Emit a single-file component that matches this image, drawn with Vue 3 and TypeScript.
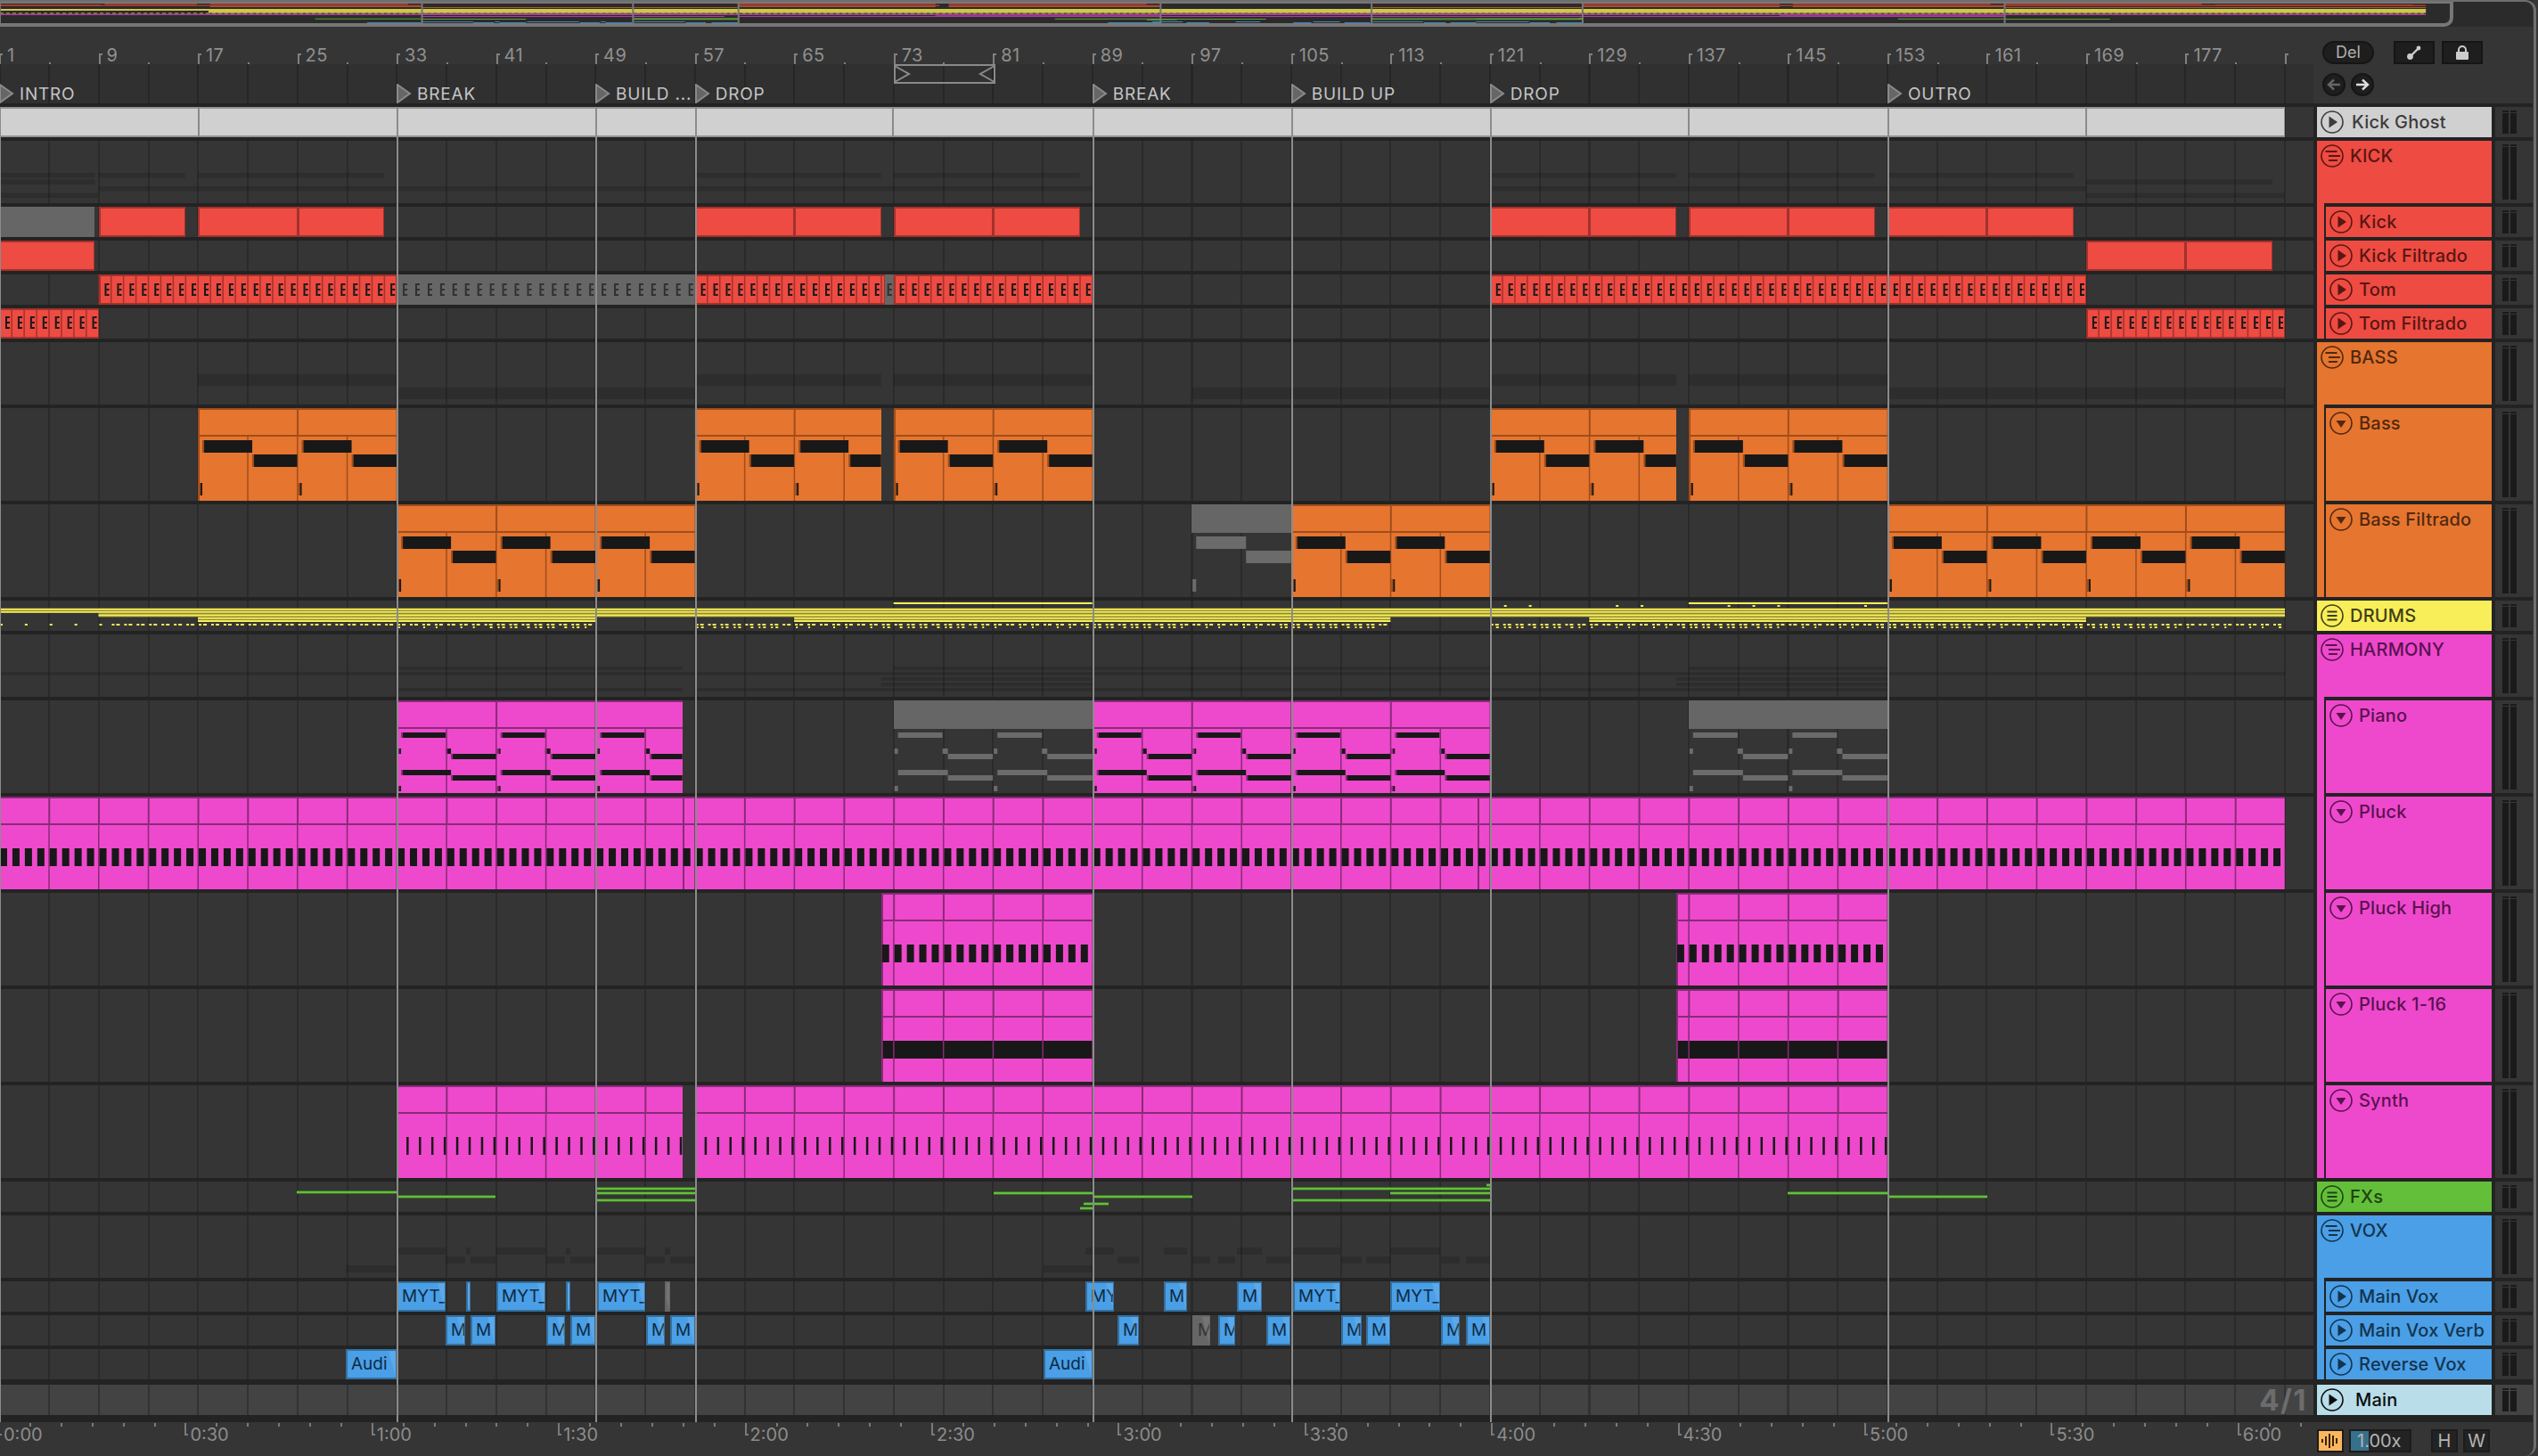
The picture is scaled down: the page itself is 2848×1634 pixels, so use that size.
<template>
  <div class="app">
    <!-- song overview strip -->
    <div class="overview">
      <svg class="overview-svg" width="2753" height="26">
        <rect v-for="(o, i) in overviewMarks" :key="i" :class="o.c" :x="o.x" :y="o.y" :width="o.w" :height="o.h" />
        <rect v-for="l in locators" :key="l.bar" class="ov-loc" :x="barX(l.bar) * OV" y="3" width="2" height="23" />
      </svg>
      <div class="overview-rim"></div>
    </div>

    <!-- bar ruler, locators, view buttons -->
    <div class="ruler">
      <div class="ruler-main">
        <div class="bar-scale">
          <template v-for="n in barTicks" :key="n">
            <i :class="(n - 1) % 8 === 0 ? 'bar-tick' : 'bar-tick-small'" :style="{ left: barX(n) + 'px' }"></i>
            <span v-if="(n - 1) % 8 === 0 && n < 185" class="bar-num" :style="{ left: barX(n) + 9 + 'px' }">{{ n }}</span>
          </template>
        </div>
        <div class="loc-lane">
          <svg class="loop" :style="{ left: barX(73) + 'px' }" width="116" height="22" viewBox="0 0 116 22">
            <path d="M1 1H113V21H1ZM1 2L17 11L1 20M113 2L97 11L113 20" fill="none" stroke="#8a8a8a" stroke-width="2" />
          </svg>
          <div v-for="l in locators" :key="l.bar" class="locator" :style="{ left: barX(l.bar) + 'px' }">
            <svg width="17" height="22" viewBox="0 0 17 22"><path d="M1 1L15 11L1 21Z" fill="#666" stroke="#8a8a8a" stroke-width="2" /></svg>
            <span>{{ l.name }}</span>
          </div>
        </div>
      </div>
      <div class="view-tools">
        <div class="tool-line">
          <span class="del">Del</span>
          <span class="square">
            <svg width="18" height="18" viewBox="0 0 18 18"><path d="M4 14L14 4" stroke="#ccc" stroke-width="2.4" /><circle cx="4.5" cy="13.5" r="3.4" fill="#ccc" /><circle cx="14" cy="4" r="2.4" fill="#ccc" /></svg>
          </span>
          <span class="square">
            <svg width="16" height="18" viewBox="0 0 16 18"><path d="M4 9V6a4 4 0 0 1 8 0v3" fill="none" stroke="#ccc" stroke-width="2" /><rect x="1" y="8" width="14" height="9" rx="1" fill="#ccc" /></svg>
          </span>
        </div>
        <div class="tool-line nav">
          <span class="round"><svg width="16" height="14" viewBox="0 0 16 14"><path d="M15 7H3M8 1.5L2 7L8 12.5" fill="none" stroke="#666" stroke-width="2.4" /></svg></span>
          <span class="round"><svg width="16" height="14" viewBox="0 0 16 14"><path d="M1 7H13M8 1.5L14 7L8 12.5" fill="none" stroke="#ddd" stroke-width="2.4" /></svg></span>
        </div>
      </div>
    </div>

    <!-- tracks -->
    <div class="tracks">
      <div
        v-for="t in tracks"
        :key="t.name"
        class="row"
        :class="[`tone-${t.tone}`, { 'row-main': t.tone === 'main' }]"
        :style="{ height: t.h + 'px' }"
      >
        <div class="lane">
          <div
            v-for="(c, i) in t.clips"
            :key="i"
            class="clip"
            :class="[t.tall ? 'clip-tall' : 'clip-short', { off: c.off, 'clip-vox': c.label !== undefined }]"
            :style="{ left: c.x + 'px', width: c.w + 'px' }"
          >
            <div v-if="t.tall" class="clip-title"></div>
            <span v-if="c.label" class="clip-label">{{ c.label }}</span>
          </div>
          <svg v-if="t.marks.length" class="marks" width="2596" :height="t.h">
            <rect v-for="(m, i) in t.marks" :key="i" :class="m.c" :x="m.x" :y="m.y" :width="m.w" :height="m.h" />
          </svg>
          <span v-if="t.tone === 'main'" class="grid-label">4/1</span>
        </div>
        <div class="head" :class="{ 'head-child': t.child }">
          <div class="head-line" :class="`icon-${t.icon}`">
            <svg class="icon" width="26" height="26" viewBox="0 0 26 26" fill="none" stroke="currentColor" stroke-width="1.6">
              <circle cx="13" cy="13" r="12" />
              <path v-if="t.icon === 'play'" d="M9.5 6.5L19 13L9.5 19.5Z" fill="currentColor" stroke="none" />
              <path v-else-if="t.icon === 'down'" d="M7.5 10H18.5L13 18Z" fill="currentColor" stroke="none" />
              <path v-else-if="t.icon === 'fold'" d="M5.5 8H18.5M9 13H22M9 18H19" stroke-width="2" />
              <path v-else d="M7.5 8.5H18.5M7.5 13H18.5M7.5 17.5H18.5" stroke-width="2" />
            </svg>
            <span class="head-name">{{ t.name }}</span>
          </div>
        </div>
        <div class="meter"><i></i><i></i></div>
      </div>
      <div class="loc-lines">
        <i v-for="l in locators" :key="l.bar" :style="{ left: barX(l.bar) + 'px' }"></i>
      </div>
    </div>

    <!-- time ruler -->
    <div class="timebar">
      <div class="time-scale">
        <i v-for="n in timeTicks" :key="n" :class="n % 6 === 0 ? 'time-major' : 'time-minor'" :style="{ left: -2 + n * (TIME30 / 6) + 'px' }"></i>
        <span v-for="n in 13" :key="n" class="time-label" :style="{ left: 4 + (n - 1) * TIME30 + 'px' }">{{ timeLabel(n - 1) }}</span>
      </div>
      <div class="time-tools">
        <span class="wave">
          <svg width="22" height="18" viewBox="0 0 22 18"><path d="M2 7V11M6 4V14M10 1V17M14 3V15M18 6V12" stroke="#3a2408" stroke-width="2" /></svg>
        </span>
        <span class="speed"><i></i><b>1.00x</b></span>
        <span class="key">H</span>
        <span class="key">W</span>
      </div>
    </div>

    <div class="frame"></div>
  </div>
</template>

<script setup lang="ts">
interface Clip {
  x: number
  w: number
  off?: boolean
  label?: string
}

interface Mark {
  x: number
  y: number
  w: number
  h: number
  c: string
}

type Tone = 'ghost' | 'red' | 'orange' | 'yellow' | 'magenta' | 'green' | 'blue' | 'main'

interface Track {
  name: string
  h: number
  tone: Tone
  icon: 'play' | 'down' | 'fold' | 'lines'
  child?: boolean
  tall?: boolean
  clips: Clip[]
  marks: Mark[]
}

const BAR = 13.94
const OV = 1.0617
const TIME30 = 209.4
const barX = (bar: number) => -1 + (bar - 1) * BAR

const b = (from: number, to: number, off = false): Clip => ({ x: barX(from), w: (to - from) * BAR, off })
const p = (l: number, r: number, label?: string, off = false): Clip => ({ x: l, w: r - l, label, off })

// vox clips only show as much of their name as fits
function vox(l: number, r: number, off = false) {
  const w = r - l
  const label = w < 14 ? '' : w < 30 ? 'M' : w < 45 ? 'MY' : 'MYT_'
  return p(l, r, label, off)
}

const locators = [
  { bar: 1, name: 'INTRO' },
  { bar: 33, name: 'BREAK' },
  { bar: 49, name: 'BUILD ...' },
  { bar: 57, name: 'DROP' },
  { bar: 89, name: 'BREAK' },
  { bar: 105, name: 'BUILD UP' },
  { bar: 121, name: 'DROP' },
  { bar: 153, name: 'OUTRO' },
]

const barTicks: number[] = []
for (let n = 1; n <= 185; n += 4) barTicks.push(n)
barTicks.push(189)

const timeTicks: number[] = []
for (let n = 0; n <= 76; n++) timeTicks.push(n)

function timeLabel(i: number) {
  return `${Math.floor(i / 2)}:${i % 2 ? '30' : '00'}`
}

// repeat a rectangle along the bar grid, cut to the clip
function tile(m: Mark[], clip: Clip, period: number, dx: number, w: number, y: number, h: number, c: string) {
  let k = Math.floor((clip.x + 1) / period) - 1
  for (; ; k++) {
    const x0 = -1 + k * period + dx
    if (x0 >= clip.x + clip.w) break
    const l = Math.max(x0, clip.x)
    const r = Math.min(x0 + w, clip.x + clip.w)
    if (r > l) m.push({ x: l, y, w: r - l, h, c })
  }
}

function dividers(m: Mark[], clips: Clip[], titleStep: number, h: number) {
  for (const c of clips) {
    if (c.off) continue
    tile(m, c, titleStep, -0.5, 2, 2, 28, 'm-edge')
    tile(m, c, BAR * 4, -0.5, 1.5, 32, h - 32, 'm-edge')
  }
}

function patternNotes(clips: Clip[], items: number[][]) {
  const m: Mark[] = []
  dividers(m, clips, BAR * 8, 104)
  for (const c of clips) {
    for (const [dx, w, y, h] of items) {
      if (!c.off) tile(m, c, BAR * 8, dx, 2, y, h, 'm-edge')
      tile(m, c, BAR * 8, c.off ? dx : dx + 2, c.off ? w : w - 2, y, h, c.off ? 'm-off' : 'm-note')
    }
  }
  return m
}

function barNotes(clips: Clip[], dx: number, w: number, c = 'm-note') {
  const m: Mark[] = []
  dividers(m, clips, BAR * 4, 104)
  for (const clip of clips) tile(m, clip, BAR, dx, w, 58, 20, c)
  return m
}

function tomNotes(clips: Clip[], top: number) {
  const m: Mark[] = []
  for (const c of clips) {
    const ink = c.off ? 'm-tom-off' : 'm-note'
    if (!c.off) tile(m, c, BAR, -0.5, 1.5, 0, 34, 'm-edge')
    tile(m, c, BAR, 7, 2, top, 14, ink)
    tile(m, c, BAR, 9, 3, top, 2, ink)
    tile(m, c, BAR, 9, 3, top + 6, 2, ink)
    tile(m, c, BAR, 9, 3, top + 12, 2, ink)
  }
  return m
}

function drumMarks() {
  const m: Mark[] = []
  const band = (from: number, to: number, y: number, h: number, c: string) =>
    m.push({ x: barX(from), y, w: (to - from) * BAR, h, c })
  band(1, 185, 8.5, 5, 'm-olive')
  band(9, 185, 13.5, 5, 'm-olive')
  band(1, 185, 9, 1.7, 'm-yellow')
  band(1, 185, 12, 1.7, 'm-yellow')
  band(9, 185, 15.5, 2, 'm-yellow')
  for (const [from, to] of [[17, 49], [65, 113], [129, 169]]) {
    band(from, to, 18, 6, 'm-olive')
    band(from, to, 19, 1.7, 'm-yellow')
    band(from, to, 22, 2, 'm-yellow')
  }
  band(73, 89, 2, 2, 'm-yellow')
  band(137, 153, 2, 2, 'm-yellow')
  for (let i = 121; i < 153; i += 1) {
    if ((i * 7 + (i % 5) * 3) % 4 === 0) m.push({ x: barX(i) + 2, y: 5, w: 3, h: 2, c: 'm-yellow' })
  }
  for (let i = 1; i < 185; i++) {
    if ((i >= 49 && i < 57) || (i >= 113 && i < 121)) continue
    const x = barX(i)
    if (i > 9 || i % 2) m.push({ x: x + 1, y: 26, w: 3, h: 2, c: 'm-yellow' })
    if (i > 9) m.push({ x: x + 6, y: 26, w: 4, h: 2, c: 'm-yellow' })
    if (i >= 33 && i % 3 !== 1) m.push({ x: x + 2, y: 29, w: 2, h: 2, c: 'm-yellow' })
    if (i >= 33 && (i % 16) > 7) m.push({ x: x + 7, y: 29, w: 3, h: 2, c: 'm-yellow' })
  }
  return m
}

function fxMarks() {
  const lines: number[][] = [
    [333, 445, 11],
    [445, 556, 16],
    [669, 781, 7],
    [669, 781, 12],
    [669, 781, 20],
    [1115, 1226, 12],
    [1226, 1338, 16],
    [1216, 1244, 24],
    [1212, 1226, 29],
    [1449, 1672, 7],
    [1560, 1672, 12],
    [1449, 1672, 20],
    [1668, 1672, 3],
    [2006, 2118, 12],
    [2118, 2230, 16],
  ]
  const m: Mark[] = []
  for (const [l, r, y] of lines) m.push({ x: l, y: y - 1, w: r - l, h: 4, c: 'm-fx-edge' })
  for (const [l, r, y] of lines) m.push({ x: l, y, w: r - l, h: 2, c: 'm-fx' })
  return m
}

const kickClips = [b(1, 8.7, true), b(9, 16), b(17, 25), b(25, 32), b(57, 65), b(65, 72), b(73, 81), b(81, 88), b(121, 129), b(129, 136), b(137, 145), b(145, 152), b(153, 161), b(161, 168)]
const filtClips = [b(1, 8.7), b(169, 177), b(177, 184)]
const tomClips = [b(9, 33), b(33, 57, true), b(57, 72.3), b(72.3, 73, true), b(73, 89), b(121, 137), b(137, 169)]
const tomFClips = [b(1, 9), b(169, 185)]
const bassClips = [b(17, 33), b(57, 72), b(73, 89), b(121, 136), b(137, 153)]
const bassFClips = [b(33, 57), b(97, 105, true), b(105, 121), b(153, 185)]
const pianoClips = [b(33, 56), b(73, 89, true), b(89, 121), b(137, 153, true)]
const pluckClips = [b(1, 56), b(56, 120), b(120, 185)]
const highClips = [b(72, 89), b(136, 153)]
const synthClips = [b(33, 56), b(57, 153)]
const mainVox = [vox(445, 500), vox(523, 528), vox(557, 612), vox(635, 640), vox(670, 724), vox(746, 752, true), vox(1218, 1250), vox(1306, 1332), vox(1388, 1416), vox(1451, 1504), vox(1560, 1616)]
const verbVox = [vox(500, 522), vox(528, 556), vox(613, 634), vox(640, 668), vox(725, 746), vox(752, 780), vox(1254, 1278), vox(1338, 1358, true), vox(1367, 1386), vox(1421, 1448), vox(1505, 1528), vox(1533, 1560), vox(1617, 1638), vox(1645, 1672)]
const revVox = [p(388, 445, 'Audi'), p(1171, 1226, 'Audi')]

const bassItems = [[5, 56, 36, 14], [61, 50.5, 52, 14], [1, 4, 84, 14]]
const pianoItems = [[5, 50, 36, 6], [61, 50.5, 60, 6], [5, 56, 78, 6], [61, 50.5, 84, 6], [1, 4, 54, 6], [55, 6, 54, 6], [1, 4, 96, 6]]

const solid: Mark[] = []
highClips.forEach((c) => solid.push({ x: c.x + 2, y: 58, w: c.w - 2, h: 20, c: 'm-note' }))
dividers(solid, highClips, BAR * 4, 104)

const ghostTicks: Mark[] = []
for (const x of [223, 1002, 1895, 2341]) ghostTicks.push({ x: x - 1, y: 0, w: 2, h: 34, c: 'm-grey' })

const tracks: Track[] = [
  { name: 'Kick Ghost', h: 34, tone: 'ghost', icon: 'play', clips: [p(-3, 2564)], marks: ghostTicks },
  { name: 'KICK', h: 70, tone: 'red', icon: 'fold', clips: [], marks: [] },
  { name: 'Kick', h: 34, tone: 'red', icon: 'play', child: true, clips: kickClips, marks: [] },
  { name: 'Kick Filtrado', h: 34, tone: 'red', icon: 'play', child: true, clips: filtClips, marks: [] },
  { name: 'Tom', h: 34, tone: 'red', icon: 'play', child: true, clips: tomClips, marks: tomNotes(tomClips, 10) },
  { name: 'Tom Filtrado', h: 34, tone: 'red', icon: 'play', child: true, clips: tomFClips, marks: tomNotes(tomFClips, 9) },
  { name: 'BASS', h: 70, tone: 'orange', icon: 'fold', clips: [], marks: [] },
  { name: 'Bass', h: 104, tone: 'orange', icon: 'down', child: true, tall: true, clips: bassClips, marks: patternNotes(bassClips, bassItems) },
  { name: 'Bass Filtrado', h: 104, tone: 'orange', icon: 'down', child: true, tall: true, clips: bassFClips, marks: patternNotes(bassFClips, bassItems) },
  { name: 'DRUMS', h: 34, tone: 'yellow', icon: 'lines', clips: [], marks: drumMarks() },
  { name: 'HARMONY', h: 70, tone: 'magenta', icon: 'fold', clips: [], marks: [] },
  { name: 'Piano', h: 104, tone: 'magenta', icon: 'down', child: true, tall: true, clips: pianoClips, marks: patternNotes(pianoClips, pianoItems) },
  { name: 'Pluck', h: 104, tone: 'magenta', icon: 'down', child: true, tall: true, clips: pluckClips, marks: barNotes(pluckClips, 1, 8) },
  { name: 'Pluck High', h: 104, tone: 'magenta', icon: 'down', child: true, tall: true, clips: highClips, marks: barNotes(highClips, 1, 8) },
  { name: 'Pluck 1-16', h: 104, tone: 'magenta', icon: 'down', child: true, tall: true, clips: highClips, marks: solid },
  { name: 'Synth', h: 104, tone: 'magenta', icon: 'down', child: true, tall: true, clips: synthClips, marks: barNotes(synthClips, 11, 2.5) },
  { name: 'FXs', h: 34, tone: 'green', icon: 'lines', clips: [], marks: fxMarks() },
  { name: 'VOX', h: 70, tone: 'blue', icon: 'fold', clips: [], marks: [] },
  { name: 'Main Vox', h: 34, tone: 'blue', icon: 'play', child: true, clips: mainVox, marks: [] },
  { name: 'Main Vox Verb', h: 34, tone: 'blue', icon: 'play', child: true, clips: verbVox, marks: [] },
  { name: 'Reverse Vox', h: 34, tone: 'blue', icon: 'play', child: true, clips: revVox, marks: [] },
  { name: 'Main', h: 34, tone: 'main', icon: 'play', clips: [], marks: [] },
]

// folded group lanes show a faint band for each child's clips
tracks.forEach((t, i) => {
  if (t.icon !== 'fold') return
  const kids: Track[] = []
  for (let j = i + 1; j < tracks.length && tracks[j].child; j++) kids.push(tracks[j])
  const step = 30 / kids.length
  kids.forEach((k, n) => {
    for (const c of k.clips) t.marks.push({ x: c.x, y: 36 + n * step, w: c.w, h: step - 2, c: 'm-ghost' })
  })
})

const overviewRows: Record<string, [number, number, string]> = {
  Kick: [4, 1.5, 'ov-red'],
  'Kick Filtrado': [5, 1, 'ov-red'],
  Tom: [5.5, 1.5, 'ov-red'],
  'Tom Filtrado': [5.5, 1.5, 'ov-red'],
  Bass: [7, 1, 'ov-orange'],
  'Bass Filtrado': [8, 1, 'ov-orange'],
  Piano: [15, 1, 'ov-magenta'],
  Pluck: [15.5, 1.5, 'ov-magenta'],
  'Pluck High': [16.5, 1, 'ov-magenta'],
  'Pluck 1-16': [17.5, 1, 'ov-magenta'],
  Synth: [18, 1, 'ov-magenta'],
  'Main Vox': [24, 1, 'ov-blue'],
  'Main Vox Verb': [25, 1, 'ov-blue'],
  'Reverse Vox': [25, 1, 'ov-blue'],
}

const overviewMarks: Mark[] = []
const end = barX(185) * OV
overviewMarks.push({ x: 0, y: 10, w: end, h: 2, c: 'ov-yellow' })
overviewMarks.push({ x: 234, y: 12, w: end - 234, h: 2.5, c: 'ov-yellow' })
for (let x = 0; x < end; x += 7) overviewMarks.push({ x, y: 14.5, w: 4, h: 1, c: 'ov-yellow' })
for (const t of tracks) {
  const row = overviewRows[t.name]
  if (row) {
    for (const c of t.clips) {
      if (!c.off) overviewMarks.push({ x: c.x * OV, y: row[0], w: c.w * OV, h: row[1], c: row[2] })
    }
  }
  if (t.tone === 'green') {
    for (const m of t.marks) {
      if (m.c === 'm-fx') overviewMarks.push({ x: m.x * OV, y: 20 + m.y / 16, w: m.w * OV, h: 1, c: 'ov-green' })
    }
  }
}
</script>

<style>
html,
body {
  margin: 0;
  background: #111;
}
</style>

<style scoped>
.app {
  position: relative;
  width: 2848px;
  height: 1634px;
  overflow: hidden;
  display: flex;
  flex-direction: column;
  background: #353535;
  font-family: Inter, "Noto Sans", sans-serif;
}

.frame {
  position: absolute;
  inset: 0 2px 0 0;
  border-top: 2px solid #6e6e6e;
  border-right: 3px solid #6e6e6e;
  border-radius: 0 12px 12px 0;
  pointer-events: none;
}

/* overview */
.overview {
  position: relative;
  height: 30px;
  flex: none;
  width: 2842px;
  background: #2b2b2b;
}

.overview-svg {
  position: absolute;
  left: 0;
  top: 0;
}

.overview-rim {
  position: absolute;
  left: -6px;
  top: 2px;
  width: 2759px;
  height: 28px;
  box-sizing: border-box;
  border: 2px solid #777;
  border-bottom-width: 4px;
  border-right-width: 4px;
  border-radius: 0 0 10px 0;
}

.ov-red {
  fill: #a83a32;
}

.ov-orange {
  fill: #a35a2a;
}

.ov-yellow {
  fill: #cfc64a;
}

.ov-magenta {
  fill: #a8409a;
}

.ov-green {
  fill: #5aa236;
}

.ov-blue {
  fill: #3e84bd;
}

.ov-loc {
  fill: #777;
}

/* bar ruler */
.ruler {
  flex: none;
  display: grid;
  grid-template-columns: 2596px 246px;
  column-gap: 4px;
  width: 2842px;
  height: 86px;
}

.ruler-main {
  position: relative;
  overflow: hidden;
  display: flex;
  flex-direction: column;
}

.bar-scale {
  position: relative;
  height: 42px;
  flex: none;
}

.bar-tick {
  position: absolute;
  top: 30px;
  width: 2px;
  height: 12px;
  background: #808080;
}

.bar-tick::after {
  content: "";
  position: absolute;
  left: 2px;
  top: 0;
  width: 2px;
  height: 2px;
  background: #808080;
}

.bar-tick-small {
  position: absolute;
  top: 40px;
  width: 2px;
  height: 2px;
  background: #808080;
}

.bar-num {
  position: absolute;
  top: 20px;
  font-size: 20px;
  line-height: 24px;
  letter-spacing: 0.4px;
  color: #909090;
}

.loc-lane {
  position: relative;
  flex: 1;
  background-color: #303030;
  background-image: repeating-linear-gradient(90deg, #262626 -1.5px 0.5px, transparent 0.5px 54.25px);
}

.loop {
  position: absolute;
  top: 0;
}

.locator {
  position: absolute;
  top: 22px;
  display: flex;
  align-items: center;
  gap: 6px;
  height: 22px;
  font-size: 19px;
  letter-spacing: 0.8px;
  color: #c4c4c4;
}

.view-tools {
  padding: 16px 0 0 6px;
  display: flex;
  flex-direction: column;
  gap: 10px;
}

.tool-line {
  display: flex;
  align-items: center;
  height: 26px;
}

.del {
  box-sizing: border-box;
  width: 58px;
  height: 26px;
  border-radius: 13px;
  margin-right: 22px;
  background: #1e1e1e;
  border: 2px solid #151515;
  color: #b0b0b0;
  font-size: 18px;
  line-height: 22px;
  text-align: center;
}

.square {
  box-sizing: border-box;
  width: 46px;
  height: 26px;
  margin-right: 8px;
  background: #1e1e1e;
  border: 2px solid #151515;
  display: flex;
  align-items: center;
  justify-content: center;
}

.nav {
  gap: 6px;
}

.round {
  box-sizing: border-box;
  width: 26px;
  height: 26px;
  border-radius: 50%;
  background: #1e1e1e;
  border: 2px solid #151515;
  display: flex;
  align-items: center;
  justify-content: center;
}

/* tracks */
.tracks {
  position: relative;
  flex: none;
  box-sizing: border-box;
  width: 2842px;
  padding: 4px 0;
  display: flex;
  flex-direction: column;
  gap: 4px;
  background: #232323;
}

.row {
  display: grid;
  grid-template-columns: 2596px 196px 42px;
  column-gap: 4px;
}

.row-main {
  margin-top: 2px;
}

.tone-ghost {
  --c: #d0d0d0;
  --e: #929292;
  --ink: #3c3c3c;
}

.tone-red {
  --c: #ee4b42;
  --e: #a2322c;
  --ink: #5a1613;
}

.tone-orange {
  --c: #e6752f;
  --e: #a04e1c;
  --ink: #52290f;
}

.tone-yellow {
  --c: #f8ee5a;
  --e: #a09a3a;
  --ink: #413e14;
}

.tone-magenta {
  --c: #ee49cc;
  --e: #8a2a78;
  --ink: #5a1250;
}

.tone-green {
  --c: #63bf3a;
  --e: #3f7a28;
  --ink: #1f4310;
}

.tone-blue {
  --c: #4a9fe6;
  --e: #34709f;
  --ink: #13344f;
}

.tone-main {
  --c: #b9dde9;
  --e: #7c9ba5;
  --ink: #0c0c0c;
}

.lane {
  position: relative;
  overflow: hidden;
  background-color: #353535;
  background-image: repeating-linear-gradient(90deg, #2a2a2a -1.5px 0.5px, transparent 0.5px 54.25px);
}

.row-main .lane {
  background-color: #434343;
  background-image: repeating-linear-gradient(90deg, #323232 -1.5px 0.5px, transparent 0.5px 54.25px);
}

.clip {
  position: absolute;
  top: 0;
  bottom: 0;
  box-sizing: border-box;
  overflow: hidden;
}

.clip-short {
  background: var(--c);
  border: 2px solid var(--e);
  border-right: 1px solid var(--e);
}

.clip-short.off {
  background: #666;
  border-color: #666;
}

.clip-tall {
  background: var(--c);
  border-left: 2px solid var(--e);
}

.clip-tall.off {
  background: transparent;
  border-left: none;
}

.clip-title {
  box-sizing: border-box;
  height: 32px;
  border-top: 2px solid var(--e);
  border-bottom: 2px solid var(--e);
  background: var(--c);
}

.off .clip-title {
  background: #666;
  border-color: #666;
}

.clip-vox::after {
  content: "";
  position: absolute;
  top: 0;
  right: 0;
  width: 8px;
  height: 100%;
  background: rgba(255, 255, 255, 0.1);
  clip-path: polygon(0 0, 100% 0, 100% 100%);
}

.clip-label {
  display: block;
  padding-left: 4px;
  font-size: 19px;
  line-height: 30px;
  color: #0e2a44;
  white-space: nowrap;
}

.off .clip-label {
  color: #333;
}

.marks {
  position: absolute;
  left: 0;
  top: 0;
  pointer-events: none;
}

.m-edge {
  fill: var(--e);
}

.m-note {
  fill: #181818;
}

.m-off {
  fill: #6b6b6b;
}

.m-tom-off {
  fill: #303030;
}

.m-grey {
  fill: #8a8a8a;
}

.m-ghost {
  fill: rgba(0, 0, 0, 0.14);
}

.m-olive {
  fill: #8f8a35;
}

.m-yellow {
  fill: #f8ee5a;
}

.m-fx {
  fill: #63bf3a;
}

.m-fx-edge {
  fill: #3d6b2a;
}

.grid-label {
  position: absolute;
  right: 7px;
  top: 0;
  font-size: 33px;
  line-height: 34px;
  letter-spacing: 1.5px;
  font-weight: 700;
  color: #6c6c6c;
}

.head {
  position: relative;
  background: var(--c);
  color: var(--ink);
}

.head-child {
  padding-left: 10px;
}

.head-child::before {
  content: "";
  position: absolute;
  left: 0;
  top: -4px;
  bottom: 0;
  width: 8px;
  background: var(--c);
}

.head-child::after {
  content: "";
  position: absolute;
  left: 8px;
  top: -4px;
  bottom: 0;
  width: 2px;
  background: #232323;
}

.head-child .head-line {
  padding-left: 4px;
}

.head-line {
  height: 34px;
  padding-left: 4px;
  display: flex;
  align-items: center;
  gap: 7px;
}

.tone-ghost .head-line {
  gap: 9px;
}

.tone-main .head-line {
  gap: 13px;
}

.icon {
  flex: none;
}

.head-name {
  font-size: 20px;
  font-weight: 500;
  letter-spacing: 0.2px;
  white-space: nowrap;
}

.meter {
  background: #353535;
  padding: 4px 0 4px 8px;
  display: flex;
  gap: 2px;
}

.row-main .meter {
  background: #434343;
}

.meter i {
  display: block;
  width: 7px;
  background: linear-gradient(#1a1a1a 0 2px, transparent 2px 3px, #1a1a1a 3px);
}

.loc-lines i {
  position: absolute;
  top: 4px;
  bottom: 0;
  width: 2px;
  background: #8c8c8c;
}

/* time ruler */
.timebar {
  flex: none;
  width: 2842px;
  display: grid;
  grid-template-columns: 2596px 242px;
  column-gap: 4px;
  height: 42px;
}

.time-scale {
  position: relative;
  overflow: hidden;
}

.time-minor {
  position: absolute;
  top: 1px;
  width: 2px;
  height: 4px;
  background: #7a7a7a;
}

.time-major {
  position: absolute;
  top: 1px;
  width: 2px;
  height: 14px;
  background: #7a7a7a;
}

.time-major::after {
  content: "";
  position: absolute;
  left: 0;
  bottom: 0;
  width: 4px;
  height: 2px;
  background: #7a7a7a;
}

.time-label {
  position: absolute;
  top: 2px;
  font-size: 20px;
  line-height: 24px;
  color: #8c8c8c;
}

.time-tools {
  padding-top: 8px;
  display: flex;
  align-items: flex-start;
}

.wave {
  box-sizing: border-box;
  width: 30px;
  height: 26px;
  background: #fdb55e;
  border: 2px solid #1c1c1c;
  display: flex;
  align-items: center;
  justify-content: center;
}

.speed {
  position: relative;
  box-sizing: border-box;
  width: 70px;
  height: 26px;
  margin: 0 22px 0 6px;
  background: #232323;
  border: 2px solid #1c1c1c;
}

.speed i {
  position: absolute;
  left: 0;
  top: 0;
  bottom: 0;
  width: 20px;
  background: #36708a;
}

.speed b {
  position: relative;
  display: block;
  padding-left: 7px;
  font-size: 20px;
  font-weight: 400;
  line-height: 22px;
  color: #b4b4b4;
}

.key {
  box-sizing: border-box;
  width: 30px;
  height: 26px;
  margin-right: 6px;
  background: #232323;
  border: 2px solid #1c1c1c;
  color: #b4b4b4;
  font-size: 20px;
  line-height: 22px;
  text-align: center;
}
</style>
